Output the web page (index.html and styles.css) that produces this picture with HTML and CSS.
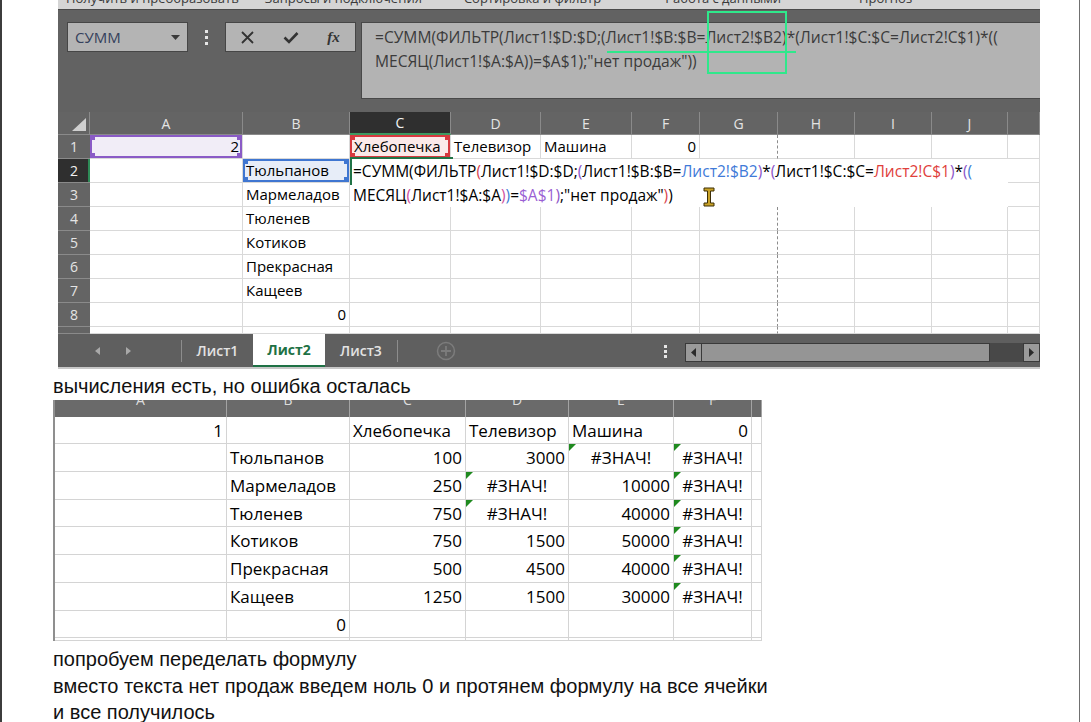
FILE: index.html
```html
<!DOCTYPE html>
<html lang="ru">
<head>
<meta charset="utf-8">
<title>Excel — ФИЛЬТР</title>
<link rel="stylesheet" href="styles.css">
</head>
<body>
<div class="page">
  <div class="xl1">
    <div class="ribbon">
      <span class="rb rb1">Получить и преобразовать</span>
      <span class="rb rb2">Запросы и подключения</span>
      <span class="rb rb3">Сортировка и фильтр</span>
      <span class="rb rb4">Работа с данными</span>
      <span class="rb rb5">Прогноз</span>
    </div>
    <div class="fbar">
      <div class="namebox"><span>СУММ</span><svg width="9" height="5" viewBox="0 0 9 5"><path d="M0 0H9L4.5 5Z" fill="#3a3a3a"/></svg></div>
      <div class="kdots"><i></i><i></i><i></i></div>
      <div class="fbtns">
        <span class="fb"><svg width="13" height="13" viewBox="0 0 13 13"><path d="M1 1L12 12M12 1L1 12" stroke="#333" stroke-width="1.8"/></svg></span>
        <span class="fb"><svg width="16" height="13" viewBox="0 0 16 13"><path d="M1.5 6.5L6 11L14.5 2" stroke="#333" stroke-width="2.6" fill="none"/></svg></span>
        <span class="fb fx">fx</span>
      </div>
      <div class="formula">
        <div>=СУММ(ФИЛЬТР(Лист1!$D:$D;(Лист1!$B:$B=Лист2!$B2)*(Лист1!$C:$C=Лист2!C$1)*((</div>
        <div>МЕСЯЦ(Лист1!$A:$A))=$A$1);"нет продаж"))</div>
      </div>
      <div class="annot-box"></div>
      <div class="annot-line"></div>
    </div>

    <div class="grid1">
      <div class="corner"><svg width="14" height="13" viewBox="0 0 14 13"><path d="M14 0V13H0Z" fill="#cfcfcf"/></svg></div>
      <div class="ch">A</div><div class="ch">B</div><div class="ch sel">C</div><div class="ch">D</div><div class="ch">E</div><div class="ch">F</div><div class="ch">G</div><div class="ch">H</div><div class="ch">I</div><div class="ch">J</div><div class="ch"></div>

      <div class="editor">
        <div>=СУММ(ФИЛЬТР<span class="p1">(</span>Лист1!$D:$D;<span class="p2">(</span>Лист1!$B:$B=<span class="rb-blue">Лист2!$B2</span><span class="p2">)</span>*<span class="p2">(</span>Лист1!$C:$C=<span class="rb-red">Лист2!C$1</span><span class="p2">)</span>*<span class="p2">(</span><span class="p3">(</span></div>
        <div>МЕСЯЦ<span class="p4">(</span>Лист1!$A:$A<span class="p4">)</span><span class="p3">)</span>=<span class="rb-purple">$A$1</span><span class="p2">)</span>;"нет продаж"<span class="p1">)</span>)</div>
      </div>

      <div class="rh">1</div>
      <div class="c r ref-p">2</div><div class="c"></div><div class="c ref-r">Хлебопечка</div><div class="c">Телевизор</div><div class="c">Машина</div><div class="c r">0</div><div class="c g"></div><div class="c"></div><div class="c"></div><div class="c"></div><div class="c"></div>

      <div class="rh sel">2</div>
      <div class="c"></div><div class="c ref-b">Тюльпанов</div><div class="c"></div>

      <div class="rh">3</div>
      <div class="c"></div><div class="c">Мармеладов</div><div class="c"></div>

      <div class="rh">4</div>
      <div class="c"></div><div class="c">Тюленев</div><div class="c"></div><div class="c"></div><div class="c"></div><div class="c"></div><div class="c g"></div><div class="c"></div><div class="c"></div><div class="c"></div><div class="c"></div>

      <div class="rh">5</div>
      <div class="c"></div><div class="c">Котиков</div><div class="c"></div><div class="c"></div><div class="c"></div><div class="c"></div><div class="c g"></div><div class="c"></div><div class="c"></div><div class="c"></div><div class="c"></div>

      <div class="rh">6</div>
      <div class="c"></div><div class="c">Прекрасная</div><div class="c"></div><div class="c"></div><div class="c"></div><div class="c"></div><div class="c g"></div><div class="c"></div><div class="c"></div><div class="c"></div><div class="c"></div>

      <div class="rh">7</div>
      <div class="c"></div><div class="c">Кащеев</div><div class="c"></div><div class="c"></div><div class="c"></div><div class="c"></div><div class="c g"></div><div class="c"></div><div class="c"></div><div class="c"></div><div class="c"></div>

      <div class="rh">8</div>
      <div class="c"></div><div class="c r">0</div><div class="c"></div><div class="c"></div><div class="c"></div><div class="c"></div><div class="c g"></div><div class="c"></div><div class="c"></div><div class="c"></div><div class="c"></div>

      <div class="rh"></div>
      <div class="c"></div><div class="c"></div><div class="c"></div><div class="c"></div><div class="c"></div><div class="c"></div><div class="c g"></div><div class="c"></div><div class="c"></div><div class="c"></div><div class="c"></div>

      <svg class="ibeam" width="12" height="20" viewBox="0 0 12 20"><path d="M1 1H11V4H7.5V16H11V19H1V16H4.5V4H1Z" fill="#c9a227" stroke="#3d2e05" stroke-width="1"/></svg>
    </div>

    <div class="tabs">
      <div class="nav">
        <svg width="5" height="8" viewBox="0 0 5 8"><path d="M5 0V8L0 4Z" fill="#a9a9a9"/></svg>
        <svg width="5" height="8" viewBox="0 0 5 8"><path d="M0 0V8L5 4Z" fill="#a9a9a9"/></svg>
      </div>
      <div class="sep"></div>
      <div class="tab t1">Лист1</div>
      <div class="tab act">Лист2</div>
      <div class="tab t3">Лист3</div>
      <div class="sep"></div>
      <div class="plus"><svg width="20" height="20" viewBox="0 0 20 20"><circle cx="10" cy="10" r="8.5" fill="none" stroke="#7c7c7c" stroke-width="1.5"/><path d="M10 5V15M5 10H15" stroke="#7c7c7c" stroke-width="1.8"/></svg></div>
      <div class="tabfill"><div class="kdots2"><i></i><i></i><i></i></div></div>
      <div class="hscroll">
        <div class="sbtn"><svg width="5" height="9" viewBox="0 0 5 9"><path d="M5 0V9L0 4.5Z" fill="#2a2a2a"/></svg></div>
        <div class="thumb"></div>
        <div class="track"></div>
        <div class="sbtn"><svg width="5" height="9" viewBox="0 0 5 9"><path d="M0 0V9L5 4.5Z" fill="#2a2a2a"/></svg></div>
      </div>
    </div>
  </div>

  <p class="cap cap1">вычисления есть, но ошибка осталась</p>

  <div class="xl2">
    <div class="h2"><span>A</span></div><div class="h2"><span>B</span></div><div class="h2"><span>C</span></div><div class="h2"><span>D</span></div><div class="h2"><span>E</span></div><div class="h2"><span>F</span></div><div class="h2"></div>

    <div class="d r">1</div><div class="d"></div><div class="d">Хлебопечка</div><div class="d">Телевизор</div><div class="d">Машина</div><div class="d r">0</div><div class="d"></div>

    <div class="d"></div><div class="d">Тюльпанов</div><div class="d r">100</div><div class="d r">3000</div><div class="d err">#ЗНАЧ!</div><div class="d err">#ЗНАЧ!</div><div class="d"></div>

    <div class="d"></div><div class="d">Мармеладов</div><div class="d r">250</div><div class="d err">#ЗНАЧ!</div><div class="d r">10000</div><div class="d err">#ЗНАЧ!</div><div class="d"></div>

    <div class="d"></div><div class="d">Тюленев</div><div class="d r">750</div><div class="d err">#ЗНАЧ!</div><div class="d r">40000</div><div class="d err">#ЗНАЧ!</div><div class="d"></div>

    <div class="d"></div><div class="d">Котиков</div><div class="d r">750</div><div class="d r">1500</div><div class="d r">50000</div><div class="d err">#ЗНАЧ!</div><div class="d"></div>

    <div class="d"></div><div class="d">Прекрасная</div><div class="d r">500</div><div class="d r">4500</div><div class="d r">40000</div><div class="d err">#ЗНАЧ!</div><div class="d"></div>

    <div class="d"></div><div class="d">Кащеев</div><div class="d r">1250</div><div class="d r">1500</div><div class="d r">30000</div><div class="d err">#ЗНАЧ!</div><div class="d"></div>

    <div class="d"></div><div class="d r">0</div><div class="d"></div><div class="d"></div><div class="d"></div><div class="d"></div><div class="d"></div>

    <div class="d"></div><div class="d"></div><div class="d"></div><div class="d"></div><div class="d"></div><div class="d"></div><div class="d"></div>
  </div>

  <div class="caps">
    <p class="cap">попробуем переделать формулу</p>
    <p class="cap">вместо текста нет продаж введем ноль 0 и протянем формулу на все ячейки</p>
    <p class="cap">и все получилось</p>
  </div>
</div>
</body>
</html>
```

FILE: styles.css
```css
* { box-sizing: border-box; }
html, body { margin: 0; padding: 0; background: #fff; }
body {
  width: 1091px; height: 722px; overflow: hidden;
  font-family: "Liberation Sans", Arial, sans-serif; color: #000;
}
.page {
  width: 1080px; height: 722px;
  border-left: 2px solid #3c3c3c;
  border-right: 1px solid #707070;
  display: flex; flex-direction: column;
}

/* ---------- Excel window 1 ---------- */
.xl1 {
  margin-left: 56px; width: 982px;
  background: #626262; position: relative;
  font-family: "Open Sans", "Noto Sans", sans-serif;
}
.ribbon {
  height: 10px; background: #d5d5d5; border-bottom: 1px solid #4a4a4a;
  overflow: hidden; display: flex; white-space: nowrap;
}
.rb { font-size: 13px; line-height: 13px; margin-top: -8px; color: #3a3a3a; }
.rb1 { margin-left: 8px; }
.rb2 { margin-left: 26px; }
.rb3 { margin-left: 42px; }
.rb4 { margin-left: 64px; }
.rb5 { margin-left: 78px; }

.fbar {
  height: 102px; display: flex; align-items: flex-start;
  padding: 12px 0 0 9px; position: relative;
}
.namebox {
  width: 121px; height: 30px; background: #b4b4b4; border: 1px solid #464646;
  display: flex; align-items: center; justify-content: space-between;
  padding: 0 7px 0 7px; color: #34415c; font-size: 15px;
}
.kdots {
  width: 37px; height: 30px; display: flex; flex-direction: column;
  align-items: center; justify-content: center; gap: 3px;
}
.kdots i, .kdots2 i { display: block; width: 3px; height: 3px; background: #e6e6e6; }
.fbtns {
  width: 131px; height: 30px; background: #b4b4b4; border: 1px solid #464646;
  display: flex; align-items: center;
}
.fb { flex: 1; display: flex; justify-content: center; align-items: center; }
.fx { font-family: "Liberation Serif", serif; font-style: italic; font-weight: bold; font-size: 15px; color: #333; }
.formula {
  margin-left: 5px; flex: 1; height: 77px;
  background: #b3b3b3; border: 1px solid #484848; border-right: none;
  padding: 2px 0 0 13px; font-size: 15.6px; line-height: 24px; color: #3b3b3b;
  white-space: nowrap;
}
.annot-box {
  position: absolute; left: 649px; top: 1px; width: 80px; height: 63px;
  border: 2px solid #2fe88b;
}
.annot-line {
  position: absolute; left: 549px; top: 41px; width: 189px; height: 2px; background: #2fe88b;
}

.grid1 {
  display: grid; position: relative; background: #fff;
  grid-template-columns: 32px 153px 107px 101px 90px 91px 68px 78px 77px 77px 76px 32px;
  grid-template-rows: 23px repeat(8, 24px) 7px;
  font-size: 15px; color: #000;
}
.corner {
  background: #646464; border-right: 1px solid #8a8a8a; border-bottom: 1px solid #8a8a8a;
  display: flex; align-items: flex-end; justify-content: flex-end; padding: 0 3px 3px 0;
}
.ch {
  background: #646464; color: #e4e4e4; border-right: 1px solid #8a8a8a; border-bottom: 1px solid #8a8a8a;
  display: flex; align-items: center; justify-content: center; font-size: 14px;
}
.ch.sel { background: #2f2f2f; color: #f2f2f2; border-bottom: 2px solid #3c9a62; }
.rh {
  background: #646464; color: #e4e4e4; border-bottom: 1px solid #8a8a8a;
  display: flex; align-items: center; justify-content: center; font-size: 14px;
}
.rh.sel { background: #2f2f2f; color: #f2f2f2; box-shadow: inset -2px 0 #2e8b57; }
.c {
  border-right: 1px solid #d9d9d9; border-bottom: 1px solid #d9d9d9;
  padding: 0 3px; line-height: 23px; white-space: nowrap;
}
.c.r { text-align: right; }
.c.g { border-right: 1px dashed #8c8c8c; }

.ref-p {
  background:
    linear-gradient(#8a5bc6, #8a5bc6) left top / 5px 5px no-repeat,
    linear-gradient(#8a5bc6, #8a5bc6) right top / 5px 5px no-repeat,
    linear-gradient(#8a5bc6, #8a5bc6) left bottom / 5px 5px no-repeat,
    linear-gradient(#8a5bc6, #8a5bc6) right bottom / 5px 5px no-repeat,
    #f1edf7;
  box-shadow: inset 0 0 0 2px #8a5bc6;
}
.ref-b {
  background:
    linear-gradient(#3f76d1, #3f76d1) left top / 5px 5px no-repeat,
    linear-gradient(#3f76d1, #3f76d1) right top / 5px 5px no-repeat,
    linear-gradient(#3f76d1, #3f76d1) left bottom / 5px 5px no-repeat,
    linear-gradient(#3f76d1, #3f76d1) right bottom / 5px 5px no-repeat,
    #e7edf8;
  box-shadow: inset 0 0 0 2px #3f76d1;
}
.ref-r {
  background:
    linear-gradient(#d6393f, #d6393f) left top / 5px 5px no-repeat,
    linear-gradient(#d6393f, #d6393f) right top / 5px 5px no-repeat,
    linear-gradient(#d6393f, #d6393f) left bottom / 5px 5px no-repeat,
    linear-gradient(#d6393f, #d6393f) right bottom / 5px 5px no-repeat,
    #fbe9e9;
  box-shadow: inset 0 0 0 2px #d6393f;
  padding-left: 4px;
}

.editor {
  grid-area: 3 / 4 / 5 / 12; background: #fff; position: relative; z-index: 1;
  padding-left: 3px; line-height: 24px; white-space: nowrap; font-size: 15.5px;
}
.editor::before {
  content: ""; position: absolute; left: 0; top: -2px; width: 101px; height: 26px;
  border-left: 2px solid #217346; border-top: 2px solid #217346;
}
.p1 { color: #d9454f; }
.p2 { color: #8c55c9; }
.p3 { color: #3d7dd6; }
.p4 { color: #cf4fa0; }
.rb-blue { color: #3f7ad8; }
.rb-red { color: #e0403c; }
.rb-purple { color: #9a5fd4; }
.ibeam { position: absolute; left: 645px; top: 75px; z-index: 2; }

.tabs {
  height: 35px; background: #5f5f5f; border-bottom: 2px solid #c8c8c8;
  display: flex; align-items: stretch;
}
.nav { width: 123px; display: flex; align-items: center; padding-left: 37px; gap: 26px; }
.sep { width: 1px; background: #8d8d8d; margin: 6px 0 5px; }
.tab {
  display: flex; align-items: center; justify-content: center;
  color: #e3e3e3; font-weight: 600; font-size: 14px;
}
.t1 { width: 71px; }
.t3 { width: 72px; }
.tab.act {
  width: 72px; background: #fff; color: #1e7145; font-weight: 700;
  border-bottom: 2px solid #1e7145;
}
.plus { width: 96px; display: flex; align-items: center; justify-content: center; }
.tabfill { flex: 1; display: flex; align-items: center; justify-content: flex-end; padding-right: 18px; }
.kdots2 { display: flex; flex-direction: column; gap: 2px; margin-top: 2px; }
.hscroll { width: 355px; height: 19px; align-self: center; margin-top: 4px; display: flex; }
.sbtn {
  width: 17px; background: #9a9a9a; border: 1px solid #3a3a3a;
  display: flex; align-items: center; justify-content: center;
}
.thumb { width: 288px; background: #959595; border: 1px solid #3a3a3a; border-left: none; }
.track { flex: 1; background: #484848; }

/* ---------- captions ---------- */
.cap { margin: 0; font-size: 20px; line-height: 26.5px; color: #111; }
.cap1 { margin: 4px 0 0 51px; line-height: 27px; }
.caps { margin: 5px 0 0 51px; }

/* ---------- Excel window 2 ---------- */
.xl2 {
  margin-left: 51px; width: 709px; border-left: 2px solid #8f8f8f;
  display: grid;
  grid-template-columns: 172px 123px 116px 103px 105px 78px 10px;
  grid-template-rows: 17px 27px 28px 28px 27px 28px 28px 28px 27px 3px;
  font-family: "Open Sans", "Noto Sans", sans-serif; font-size: 17px;
}
.h2 {
  background: #6a6a6a; border-right: 1px solid #a3a3a3; overflow: hidden;
  display: flex; justify-content: center; align-items: flex-start;
  color: #dcdcdc; font-size: 14px;
}
.h2 span { line-height: 14px; margin-top: -7px; }
.d {
  border-right: 1px solid #d4d4d4; border-bottom: 1px solid #d4d4d4;
  padding: 0 3px; display: flex; align-items: center; white-space: nowrap;
  position: relative;
}
.d.r { justify-content: flex-end; }
.d.err { justify-content: center; }
.d.err::before {
  content: ""; position: absolute; left: 0; top: 0; width: 0; height: 0;
  border-top: 7px solid #1f8a1f; border-right: 7px solid transparent;
}
```
